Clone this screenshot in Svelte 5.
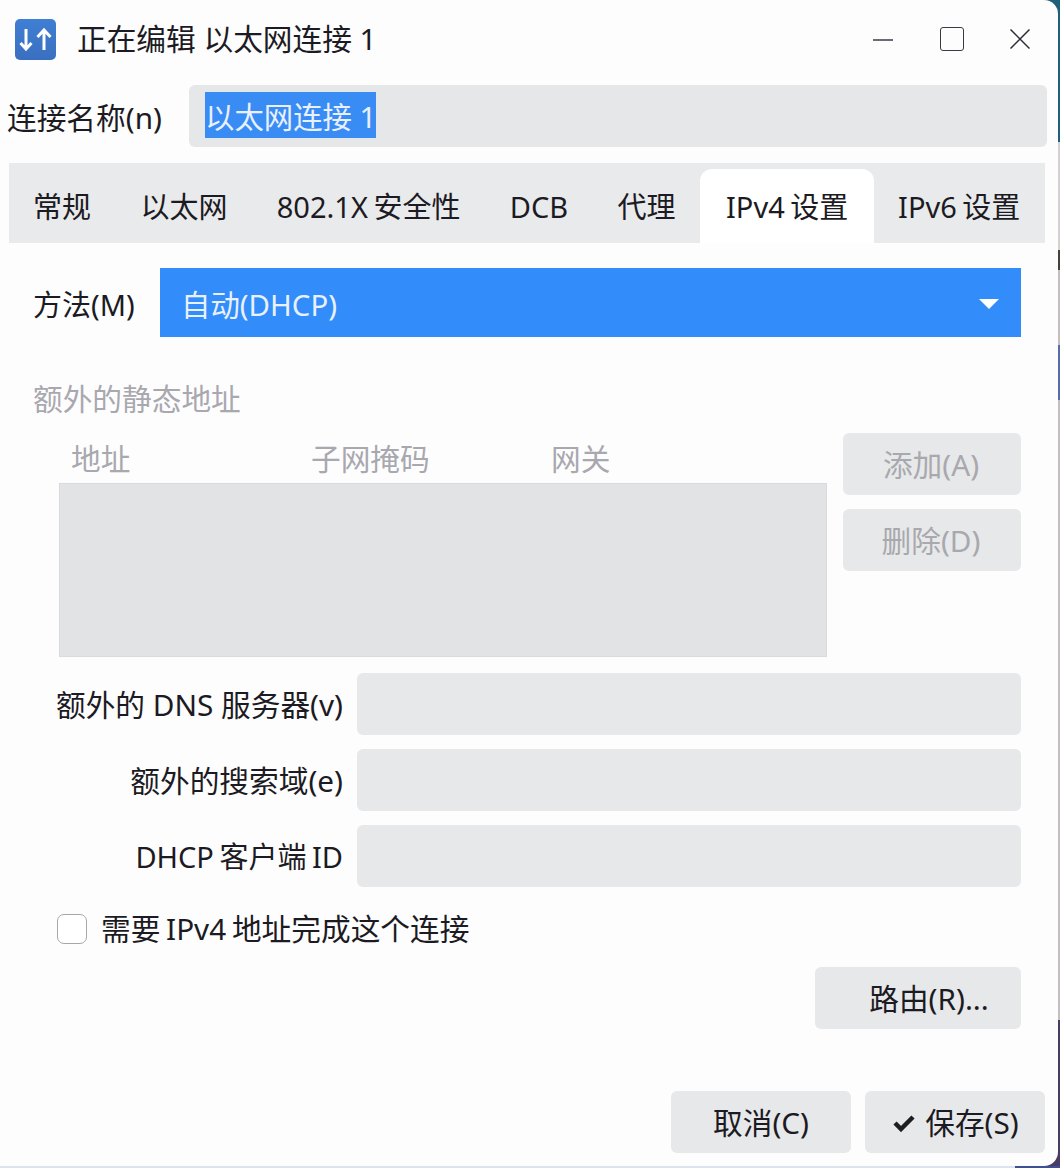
<script>
	const tabs = ['常规', '以太网', '802.1X 安全性', 'DCB', '代理', 'IPv4 设置', 'IPv6 设置']
	const active = 'IPv4 设置'
	const columns = ['地址', '子网掩码', '网关']
	const fields = ['额外的 DNS 服务器(v)', '额外的搜索域(e)', 'DHCP 客户端 ID']
</script>

<div class="window">
	<header>
		<span class="app-icon">
			<svg viewBox="0 0 41 41" width="41" height="41">
				<path d="M11 10v20M5.5 24l5.5 6 5.5-6M29 31V11M22.5 18l6.5-7 6.5 7" fill="none" stroke="#fff" stroke-width="3" />
			</svg>
		</span>
		<h1>正在编辑 以太网连接 1</h1>
		<div class="controls">
			<svg class="min" viewBox="0 0 20 2" width="20" height="2"><path d="M0 1h20" stroke="#3a3a44" stroke-width="1.5" /></svg>
			<span class="max"></span>
			<svg class="close" viewBox="0 0 20 20" width="20" height="20"><path d="M.5.5l19 19M19.5.5l-19 19" stroke="#2c2c34" stroke-width="1.5" /></svg>
		</div>
	</header>

	<div class="name-row">
		<span class="name-label">连接名称(n)</span>
		<div class="name-input"><mark>以太网连接 1</mark></div>
	</div>

	<nav>
		{#each tabs as tab}
			<span class="tab" class:active={tab === active}>{tab}</span>
		{/each}
	</nav>

	<main>
		<div class="method">
			<span class="method-label">方法(M)</span>
			<div class="select">
				<span>自动(DHCP)</span>
				<i class="caret"></i>
			</div>
		</div>

		<div class="section-title">额外的静态地址</div>

		<div class="addresses">
			<div class="table">
				<div class="thead">
					{#each columns as col}
						<span>{col}</span>
					{/each}
				</div>
				<div class="tbody"></div>
			</div>
			<div class="side">
				<button disabled>添加(A)</button>
				<button disabled>删除(D)</button>
			</div>
		</div>

		<div class="fields">
			{#each fields as field, i}
				<label class:tight={i === 2}>{field}</label>
				<div class="field"></div>
			{/each}
		</div>

		<div class="check">
			<span class="box"></span>
			<span class="check-text">需要 IPv4 地址完成这个连接</span>
		</div>

		<div class="routes">
			<button class="route">路由(R)...</button>
		</div>
	</main>

	<footer>
		<button>取消(C)</button>
		<button class="save">
			<svg viewBox="0 0 22 18" width="22" height="18"><path d="M2 9l6 6L20 3" fill="none" stroke="#1d1d22" stroke-width="4.5" /></svg>
			保存(S)
		</button>
	</footer>
</div>

<style>
	:global(html), :global(body) {
		height: 100%;
	}

	:global(body) {
		background:
			linear-gradient(to right, #dbe4ee 1015px, #3e4f93 1015px) bottom / 100% 2px no-repeat,
			linear-gradient(to bottom,
				#1f5f78 142px,
				#d8cfcf 142px, #d8cfcf 250px,
				#4a4038 250px, #4a4038 270px,
				#c9bcbc 270px, #c9bcbc 345px,
				#5a6ca8 345px, #5a6ca8 400px,
				#c9bcbc 400px, #c9bcbc 1020px,
				#4b3a62 1020px);
	}

	.window {
		box-sizing: border-box;
		width: 1058px;
		height: 1166px;
		background: #fdfdfe;
		border-radius: 0 14px 14px 0;
		color: #1c1a22;
		font-family: "Noto Sans", "Noto Sans CJK SC", sans-serif;
		font-size: 29.7px;
		line-height: 40px;
	}

	header {
		display: flex;
		align-items: center;
		height: 77px;
		padding-left: 15px;
	}

	.app-icon {
		display: block;
		width: 41px;
		height: 41px;
		margin-top: 1px;
		border-radius: 5px;
		background: linear-gradient(#3f7fd4, #3a6fc0);
	}

	.app-icon svg {
		display: block;
	}

	h1 {
		margin: 0 0 0 21px;
		font-size: 29.7px;
		font-weight: 400;
	}

	.controls {
		display: flex;
		align-items: center;
		margin-left: auto;
		padding-right: 28px;
	}

	.min {
		margin-right: 47px;
		margin-top: 3px;
	}

	.max {
		box-sizing: border-box;
		width: 24px;
		height: 24px;
		margin-right: 46px;
		border: 1.5px solid #3a3a44;
		border-radius: 3px;
	}

	.name-row {
		display: flex;
		align-items: center;
		margin-top: 8px;
		padding: 0 11px 0 7px;
	}

	.name-label {
		width: 182px;
		padding-top: 4px;
	}

	.name-input {
		flex: 1;
		height: 62px;
		padding: 9px 0 0 16px;
		box-sizing: border-box;
		border-radius: 6px;
		background: #e6e7e8;
		font-size: 29.4px;
	}

	mark {
		display: inline-block;
		height: 46px;
		margin-top: -2px;
		padding-top: 2px;
		box-sizing: border-box;
		line-height: 46px;
		background: #3a8cf5;
		color: #e8f1fd;
	}

	nav {
		display: flex;
		align-items: flex-end;
		box-sizing: border-box;
		height: 80px;
		margin: 16px 13px 0 9px;
		background: #e9eaeb;
		font-size: 29px;
		word-spacing: -2px;
	}

	.tab {
		display: block;
		padding: 18px 24.7px 16px;
		line-height: 40px;
		white-space: nowrap;
	}

	.tab:first-child {
		padding-left: 24px;
	}

	.tab.active {
		width: 174px;
		box-sizing: border-box;
		padding: 18px 0 16px;
		text-align: center;
		border-radius: 12px 12px 0 0;
		background: #fff;
	}

	.tab.active + .tab {
		padding-left: 24px;
	}

	main {
		padding: 25px 37px 0 33px;
	}

	.method {
		display: flex;
		align-items: center;
		font-size: 29px;
	}

	.method-label {
		width: 127px;
		padding-top: 4px;
	}

	.select {
		display: flex;
		flex: 1;
		align-items: center;
		justify-content: space-between;
		box-sizing: border-box;
		height: 69px;
		padding: 4px 22px 0 21px;
		background: #328cfa;
		color: #e8f1fd;
		font-size: 29.4px;
	}

	.caret {
		width: 0;
		height: 0;
		margin-top: -2px;
		border-left: 10px solid transparent;
		border-right: 10px solid transparent;
		border-top: 10px solid #fff;
	}

	.section-title {
		margin-top: 42px;
		color: #a8a8ae;
	}

	.addresses {
		display: flex;
		gap: 16px;
		margin: 14px 0 0 26px;
	}

	.table {
		width: 768px;
	}

	.thead {
		display: grid;
		grid-template-columns: repeat(3, 240px);
		height: 50px;
		padding: 6px 0 0 12px;
		box-sizing: border-box;
		color: #a8a8ae;
	}

	.tbody {
		box-sizing: border-box;
		height: 174px;
		border: 1px solid #d9dadc;
		background: #e2e3e5;
	}

	.side {
		display: flex;
		flex-direction: column;
		gap: 14px;
		width: 178px;
	}

	button {
		box-sizing: border-box;
		height: 62px;
		padding: 2px 0 0;
		border: 0;
		border-radius: 6px;
		background: #e7e8e9;
		color: #1c1a22;
		font: inherit;
	}

	button:disabled {
		padding-right: 2px;
		color: #a8a8ae;
	}

	.fields {
		display: grid;
		grid-template-columns: 310px 1fr;
		column-gap: 14px;
		row-gap: 14px;
		margin-top: 16px;
	}

	.fields label {
		align-self: center;
		padding-top: 2px;
		text-align: right;
		white-space: nowrap;
	}

	.fields label.tight {
		font-size: 29px;
		word-spacing: -2px;
	}

	.field {
		height: 62px;
		border-radius: 6px;
		background: #e7e8e9;
	}

	.check {
		display: flex;
		align-items: center;
		gap: 14px;
		margin: 22px 0 0 24px;
		height: 40px;
	}

	.check-text {
		word-spacing: -2px;
	}

	.box {
		box-sizing: border-box;
		width: 30px;
		height: 30px;
		border: 1px solid #a6a6ac;
		border-radius: 7px;
		background: #fff;
	}

	.routes {
		display: flex;
		justify-content: flex-end;
		margin-top: 18px;
	}

	.route {
		width: 206px;
		padding-left: 22px;
	}

	footer {
		display: flex;
		justify-content: flex-end;
		gap: 14px;
		margin-top: 62px;
		padding-right: 13px;
	}

	footer button {
		width: 180px;
	}

	.save {
		display: flex;
		align-items: center;
		justify-content: center;
		gap: 10px;
		padding-left: 2px;
	}
</style>
